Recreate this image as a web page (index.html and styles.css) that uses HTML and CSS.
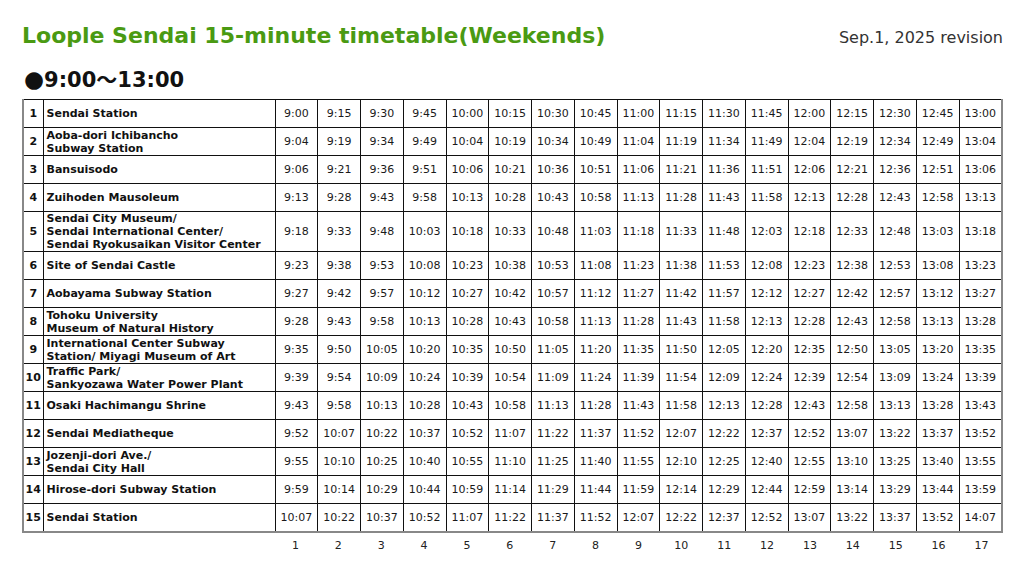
FILE: index.html
```html
<!DOCTYPE html>
<html lang="en">
<head>
<meta charset="utf-8">
<title>Loople Sendai 15-minute timetable (Weekends)</title>
<link rel="stylesheet" href="styles.css">
</head>
<body>
<div class="page">
  <header class="top">
    <h1 class="title">Loople Sendai 15-minute timetable(Weekends)</h1>
    <p class="rev">Sep.1, 2025 revision</p>
  </header>
  <h2 class="period"><span class="dot">●</span>9:00～13:00</h2>
  <table class="tt">
    <colgroup><col class="c-no"><col class="c-name"><col span="17"></colgroup>
    <tbody>
      <tr><td class="no">1</td><td class="name">Sendai Station</td><td>9:00</td><td>9:15</td><td>9:30</td><td>9:45</td><td>10:00</td><td>10:15</td><td>10:30</td><td>10:45</td><td>11:00</td><td>11:15</td><td>11:30</td><td>11:45</td><td>12:00</td><td>12:15</td><td>12:30</td><td>12:45</td><td>13:00</td></tr>
      <tr><td class="no">2</td><td class="name">Aoba-dori Ichibancho<br>Subway Station</td><td>9:04</td><td>9:19</td><td>9:34</td><td>9:49</td><td>10:04</td><td>10:19</td><td>10:34</td><td>10:49</td><td>11:04</td><td>11:19</td><td>11:34</td><td>11:49</td><td>12:04</td><td>12:19</td><td>12:34</td><td>12:49</td><td>13:04</td></tr>
      <tr><td class="no">3</td><td class="name">Bansuisodo</td><td>9:06</td><td>9:21</td><td>9:36</td><td>9:51</td><td>10:06</td><td>10:21</td><td>10:36</td><td>10:51</td><td>11:06</td><td>11:21</td><td>11:36</td><td>11:51</td><td>12:06</td><td>12:21</td><td>12:36</td><td>12:51</td><td>13:06</td></tr>
      <tr><td class="no">4</td><td class="name">Zuihoden Mausoleum</td><td>9:13</td><td>9:28</td><td>9:43</td><td>9:58</td><td>10:13</td><td>10:28</td><td>10:43</td><td>10:58</td><td>11:13</td><td>11:28</td><td>11:43</td><td>11:58</td><td>12:13</td><td>12:28</td><td>12:43</td><td>12:58</td><td>13:13</td></tr>
      <tr><td class="no">5</td><td class="name">Sendai City Museum/<br>Sendai International Center/<br>Sendai Ryokusaikan Visitor Center</td><td>9:18</td><td>9:33</td><td>9:48</td><td>10:03</td><td>10:18</td><td>10:33</td><td>10:48</td><td>11:03</td><td>11:18</td><td>11:33</td><td>11:48</td><td>12:03</td><td>12:18</td><td>12:33</td><td>12:48</td><td>13:03</td><td>13:18</td></tr>
      <tr><td class="no">6</td><td class="name">Site of Sendai Castle</td><td>9:23</td><td>9:38</td><td>9:53</td><td>10:08</td><td>10:23</td><td>10:38</td><td>10:53</td><td>11:08</td><td>11:23</td><td>11:38</td><td>11:53</td><td>12:08</td><td>12:23</td><td>12:38</td><td>12:53</td><td>13:08</td><td>13:23</td></tr>
      <tr><td class="no">7</td><td class="name">Aobayama Subway Station</td><td>9:27</td><td>9:42</td><td>9:57</td><td>10:12</td><td>10:27</td><td>10:42</td><td>10:57</td><td>11:12</td><td>11:27</td><td>11:42</td><td>11:57</td><td>12:12</td><td>12:27</td><td>12:42</td><td>12:57</td><td>13:12</td><td>13:27</td></tr>
      <tr><td class="no">8</td><td class="name">Tohoku University<br>Museum of Natural History</td><td>9:28</td><td>9:43</td><td>9:58</td><td>10:13</td><td>10:28</td><td>10:43</td><td>10:58</td><td>11:13</td><td>11:28</td><td>11:43</td><td>11:58</td><td>12:13</td><td>12:28</td><td>12:43</td><td>12:58</td><td>13:13</td><td>13:28</td></tr>
      <tr><td class="no">9</td><td class="name">International Center Subway<br>Station/ Miyagi Museum of Art</td><td>9:35</td><td>9:50</td><td>10:05</td><td>10:20</td><td>10:35</td><td>10:50</td><td>11:05</td><td>11:20</td><td>11:35</td><td>11:50</td><td>12:05</td><td>12:20</td><td>12:35</td><td>12:50</td><td>13:05</td><td>13:20</td><td>13:35</td></tr>
      <tr><td class="no">10</td><td class="name">Traffic Park/<br>Sankyozawa Water Power Plant</td><td>9:39</td><td>9:54</td><td>10:09</td><td>10:24</td><td>10:39</td><td>10:54</td><td>11:09</td><td>11:24</td><td>11:39</td><td>11:54</td><td>12:09</td><td>12:24</td><td>12:39</td><td>12:54</td><td>13:09</td><td>13:24</td><td>13:39</td></tr>
      <tr><td class="no">11</td><td class="name">Osaki Hachimangu Shrine</td><td>9:43</td><td>9:58</td><td>10:13</td><td>10:28</td><td>10:43</td><td>10:58</td><td>11:13</td><td>11:28</td><td>11:43</td><td>11:58</td><td>12:13</td><td>12:28</td><td>12:43</td><td>12:58</td><td>13:13</td><td>13:28</td><td>13:43</td></tr>
      <tr><td class="no">12</td><td class="name">Sendai Mediatheque</td><td>9:52</td><td>10:07</td><td>10:22</td><td>10:37</td><td>10:52</td><td>11:07</td><td>11:22</td><td>11:37</td><td>11:52</td><td>12:07</td><td>12:22</td><td>12:37</td><td>12:52</td><td>13:07</td><td>13:22</td><td>13:37</td><td>13:52</td></tr>
      <tr><td class="no">13</td><td class="name">Jozenji-dori Ave./<br>Sendai City Hall</td><td>9:55</td><td>10:10</td><td>10:25</td><td>10:40</td><td>10:55</td><td>11:10</td><td>11:25</td><td>11:40</td><td>11:55</td><td>12:10</td><td>12:25</td><td>12:40</td><td>12:55</td><td>13:10</td><td>13:25</td><td>13:40</td><td>13:55</td></tr>
      <tr><td class="no">14</td><td class="name">Hirose-dori Subway Station</td><td>9:59</td><td>10:14</td><td>10:29</td><td>10:44</td><td>10:59</td><td>11:14</td><td>11:29</td><td>11:44</td><td>11:59</td><td>12:14</td><td>12:29</td><td>12:44</td><td>12:59</td><td>13:14</td><td>13:29</td><td>13:44</td><td>13:59</td></tr>
      <tr><td class="no">15</td><td class="name">Sendai Station</td><td>10:07</td><td>10:22</td><td>10:37</td><td>10:52</td><td>11:07</td><td>11:22</td><td>11:37</td><td>11:52</td><td>12:07</td><td>12:22</td><td>12:37</td><td>12:52</td><td>13:07</td><td>13:22</td><td>13:37</td><td>13:52</td><td>14:07</td></tr>
    </tbody>
  </table>
  <table class="trips">
    <colgroup><col class="c-no"><col class="c-name"><col span="17"></colgroup>
    <tbody>
      <tr><td></td><td></td><td>1</td><td>2</td><td>3</td><td>4</td><td>5</td><td>6</td><td>7</td><td>8</td><td>9</td><td>10</td><td>11</td><td>12</td><td>13</td><td>14</td><td>15</td><td>16</td><td>17</td></tr>
    </tbody>
  </table>
</div>
</body>
</html>
```

FILE: styles.css
```css
* { box-sizing: border-box; }
html, body { margin: 0; padding: 0; background: #fff; }
body { font-family: "DejaVu Sans", "Noto Sans CJK JP", sans-serif; color: #111; }

.page { padding: 22px 21px 0 22px; }

.top {
  display: flex;
  justify-content: space-between;
  align-items: baseline;
}
.title {
  margin: 0;
  font-size: 22px;
  line-height: 28px;
  font-weight: bold;
  color: #4a9a12;
}
.rev {
  margin: 0;
  font-size: 16px;
  line-height: 28px;
  color: #333;
}

.period {
  margin: 15px 0 0 2px;
  font-size: 21px;
  line-height: 26px;
  font-weight: bold;
  color: #111;
}
.dot {
  font-size: 23px;
  line-height: 20px;
  margin-right: 0;
}

.tt, .trips {
  width: 981px;
  table-layout: fixed;
  border-collapse: collapse;
  font-size: 11px;
}
.c-no { width: 20px; }
.c-name { width: 232px; }

.tt {
  margin-top: 6px;
  border-top: 1px solid #333;
  border-left: 2px solid #888;
  border-right: 2px solid #888;
  border-bottom: 2px solid #888;
}
.tt td {
  border: 1px solid #111;
  height: 28px;
  padding: 0;
  text-align: center;
  vertical-align: middle;
  line-height: 13px;
  color: #1a1a1a;
  white-space: nowrap;
}
.tt td.no {
  font-weight: bold;
  color: #111;
}
.tt td.name {
  text-align: left;
  padding-left: 3px;
  font-weight: bold;
  color: #111;
}

.trips td {
  padding: 6px 0 0;
  text-align: center;
  line-height: 13px;
  color: #222;
}
```
